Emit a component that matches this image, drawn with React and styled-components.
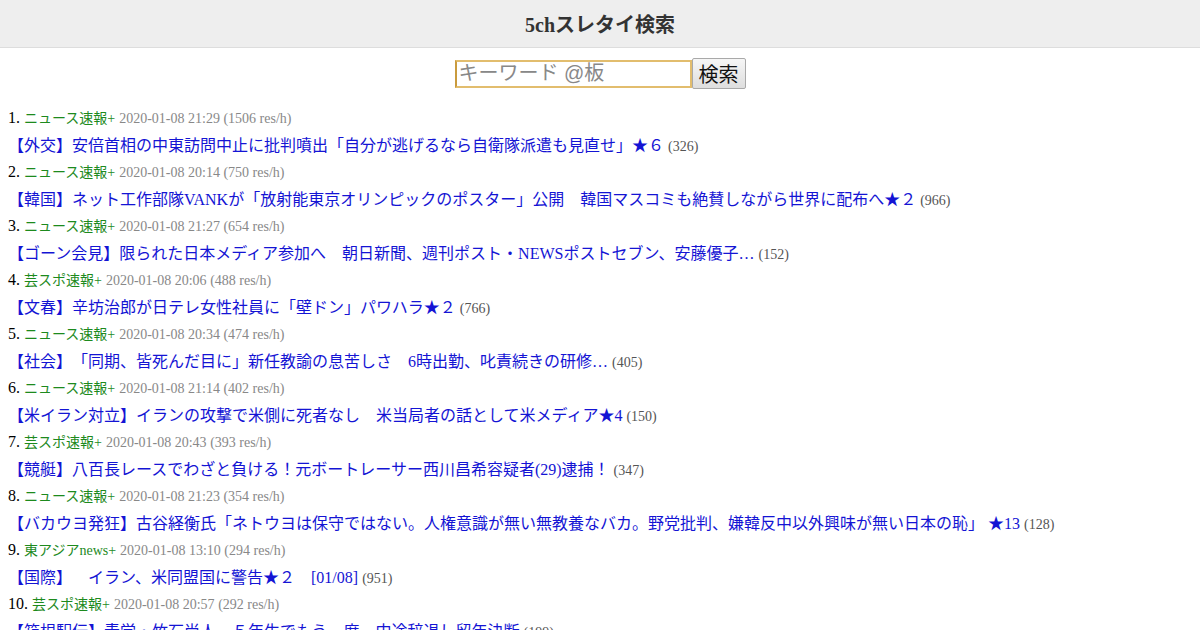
import React, { useState } from "react";
import styled, { createGlobalStyle } from "styled-components";

const GlobalStyle = createGlobalStyle`
  body {
    margin: 0;
    background: #fff;
    font-family: "Liberation Serif", "Noto Sans CJK JP", serif;
    color: #000;
    text-spacing-trim: space-all;
  }
`;

const threads = [
  { board: "ニュース速報+", date: "2020-01-08 21:29", rate: 1506, title: "【外交】安倍首相の中東訪問中止に批判噴出「自分が逃げるなら自衛隊派遣も見直せ」★６", count: 326 },
  { board: "ニュース速報+", date: "2020-01-08 20:14", rate: 750, title: "【韓国】ネット工作部隊VANKが「放射能東京オリンピックのポスター」公開　韓国マスコミも絶賛しながら世界に配布へ★２", count: 966 },
  { board: "ニュース速報+", date: "2020-01-08 21:27", rate: 654, title: "【ゴーン会見】限られた日本メディア参加へ　朝日新聞、週刊ポスト・NEWSポストセブン、安藤優子…", count: 152 },
  { board: "芸スポ速報+", date: "2020-01-08 20:06", rate: 488, title: "【文春】辛坊治郎が日テレ女性社員に「壁ドン」パワハラ★２", count: 766 },
  { board: "ニュース速報+", date: "2020-01-08 20:34", rate: 474, title: "【社会】「同期、皆死んだ目に」新任教諭の息苦しさ　6時出勤、叱責続きの研修…", count: 405 },
  { board: "ニュース速報+", date: "2020-01-08 21:14", rate: 402, title: "【米イラン対立】イランの攻撃で米側に死者なし　米当局者の話として米メディア★4", count: 150 },
  { board: "芸スポ速報+", date: "2020-01-08 20:43", rate: 393, title: "【競艇】八百長レースでわざと負ける！元ボートレーサー西川昌希容疑者(29)逮捕！", count: 347 },
  { board: "ニュース速報+", date: "2020-01-08 21:23", rate: 354, title: "【バカウヨ発狂】古谷経衡氏「ネトウヨは保守ではない。人権意識が無い無教養なバカ。野党批判、嫌韓反中以外興味が無い日本の恥」 ★13", count: 128 },
  { board: "東アジアnews+", date: "2020-01-08 13:10", rate: 294, title: "【国際】　イラン、米同盟国に警告★２　[01/08]", count: 951 },
  { board: "芸スポ速報+", date: "2020-01-08 20:57", rate: 292, title: "【箱根駅伝】青学・竹石尚人　５年生でもう一度　中途辞退し留年決断", count: 199 },
];

const App = () => {
  const [keyword, setKeyword] = useState("");

  return (
    <>
      <GlobalStyle />
      <Header>
        <Title>5chスレタイ検索</Title>
      </Header>
      <SearchForm onSubmit={(e) => e.preventDefault()}>
        <SearchInput
          type="text"
          placeholder="キーワード @板"
          value={keyword}
          onChange={(e) => setKeyword(e.target.value)}
        />
        <SearchButton type="submit">検索</SearchButton>
      </SearchForm>
      <List>
        {threads.map((t, i) => (
          <Item key={i}>
            <Meta>
              <Rank>{i + 1}.</Rank> <Board>{t.board}</Board>{" "}
              <Info>
                {t.date} ({t.rate} res/h)
              </Info>
            </Meta>
            <TitleLine>
              <ThreadLink href="#">{t.title}</ThreadLink>{" "}
              <Count>({t.count})</Count>
            </TitleLine>
          </Item>
        ))}
      </List>
    </>
  );
};

const Header = styled.header`
  background: #eee;
  border-bottom: 1px solid #ddd;
  height: 47px;
  display: flex;
  align-items: center;
  justify-content: center;
`;

const Title = styled.h1`
  margin: 0;
  font-size: 20px;
  font-weight: bold;
  color: #333;
`;

const SearchForm = styled.form`
  display: flex;
  justify-content: center;
  align-items: center;
  margin: 10px 0 15px;
`;

const SearchInput = styled.input`
  box-sizing: border-box;
  width: 237px;
  height: 28px;
  padding: 0 2px;
  font-size: 20px;
  font-family: "Liberation Sans", "Noto Sans CJK JP", sans-serif;
  border: 2px solid #e2bd6e;
  border-left-color: #c99b3e;
  outline: none;
  &::placeholder {
    color: #888;
  }
`;

const SearchButton = styled.button`
  box-sizing: border-box;
  height: 31px;
  padding: 0 6px;
  font-size: 20px;
  font-family: "Liberation Sans", "Noto Sans CJK JP", sans-serif;
  color: #111;
  background: linear-gradient(#f6f6f6, #dedede);
  border: 1px solid #a9a9a9;
  border-radius: 2px;
`;

const List = styled.div`
  padding: 0 8px;
`;

const Item = styled.div``;

const Meta = styled.div`
  height: 29px;
  line-height: 27px;
  white-space: nowrap;
`;

const Rank = styled.span`
  font-size: 16px;
`;

const Board = styled.span`
  font-size: 14px;
  color: #1d8a1d;
`;

const Info = styled.span`
  font-size: 14px;
  color: #888;
`;

const TitleLine = styled.div`
  height: 25px;
  line-height: 25px;
  white-space: nowrap;
`;

const ThreadLink = styled.a`
  font-size: 16px;
  color: #1414d4;
  text-decoration: none;
`;

const Count = styled.span`
  font-size: 14px;
  color: #555;
`;

export default App;
